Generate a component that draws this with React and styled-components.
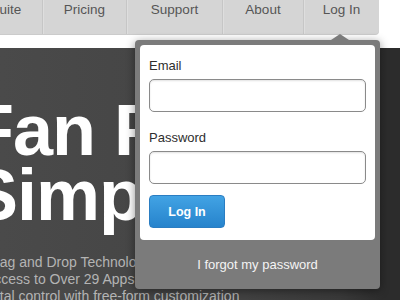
import React from 'react';
import styled, { createGlobalStyle } from 'styled-components';

const GlobalStyle = createGlobalStyle`
    html, body {
        margin: 0;
        padding: 0;
        background: #ffffff;
        font-family: "Liberation Sans", Arial, Helvetica, sans-serif;
        overflow: hidden;
    }
`;

const Page = styled.div`
    position: relative;
    width: 400px;
    height: 300px;
    overflow: hidden;
    display: flex;
    flex-direction: column;
`;

const TopBar = styled.div`
    height: 48px;
    flex: none;
    background: #ffffff;
`;

const Nav = styled.nav`
    width: 379px;
    height: 34px;
    display: flex;
    justify-content: flex-end;
    overflow: hidden;
    background: #d5d5d5;
    border-bottom-right-radius: 4px;
    box-shadow: 0 1px 0 #cbcbcb;
`;

const NavItem = styled.a`
    flex: none;
    width: ${(p) => p.$w}px;
    line-height: 20px;
    text-align: center;
    font-size: 13.5px;
    color: #555555;
    border-left: ${(p) => (p.$first ? 'none' : '1px solid #c6c6c6')};
    box-shadow: ${(p) => (p.$first ? 'none' : 'inset 1px 0 0 #dedede')};
    box-sizing: border-box;
    cursor: pointer;
`;

const Hero = styled.section`
    flex: 1;
    padding-top: 50px;
    background: linear-gradient(90deg, #4a4a4a 0%, #444444 55%, #3a3a3a 85%, #2c2c2c 96%);
`;

const Title = styled.h1`
    margin: 0 0 0 -30px;
    font-size: 72px;
    line-height: 65px;
    font-weight: bold;
    letter-spacing: -1px;
    color: #ffffff;
    white-space: nowrap;
`;

const Features = styled.div`
    margin: 26px 0 0 -15px;
    font-size: 14px;
    line-height: 17px;
    color: #b4b4b4;
    white-space: nowrap;
`;

const Popover = styled.div`
    position: absolute;
    left: 135px;
    top: 40px;
    width: 245px;
    padding: 5px 5px 0;
    box-sizing: border-box;
    background: #7b7b7b;
    border-radius: 4px;
    box-shadow: 0 2px 10px rgba(0, 0, 0, 0.45);

    &::before {
        content: '';
        position: absolute;
        top: -6px;
        left: 196px;
        border-left: 9px solid transparent;
        border-right: 9px solid transparent;
        border-bottom: 6px solid #7b7b7b;
    }
`;

const Panel = styled.form`
    background: #ffffff;
    border-radius: 4px;
    padding: 13px 9px 12px;
    display: flex;
    flex-direction: column;
`;

const Label = styled.label`
    font-size: 13px;
    line-height: 16px;
    color: #2e2e2e;
    margin-bottom: 5px;
`;

const Input = styled.input`
    height: 33px;
    box-sizing: border-box;
    border: 1px solid #8a8a8a;
    border-radius: 5px;
    box-shadow: inset 0 1px 2px rgba(0, 0, 0, 0.12);
    margin-bottom: ${(p) => p.$gap}px;
    padding: 0 8px;
    font: inherit;
    outline: none;
`;

const Button = styled.button`
    width: 76px;
    height: 33px;
    border: 1px solid #2a7dc2;
    border-radius: 4px;
    background: linear-gradient(#42a3e4, #2683cc);
    color: #ffffff;
    font-family: inherit;
    font-size: 12.5px;
    font-weight: bold;
    cursor: pointer;
`;

const Footer = styled.div`
    height: 49px;
    display: flex;
    align-items: center;
    justify-content: center;
    font-size: 13px;
    color: #f4f4f4;
    cursor: pointer;
`;

const navItems = [
    { label: 'Suite', w: 72 },
    { label: 'Pricing', w: 84 },
    { label: 'Support', w: 96 },
    { label: 'About', w: 81 },
    { label: 'Log In', w: 76 },
];

function App() {
    return (
        <Page>
            <GlobalStyle />
            <TopBar>
                <Nav>
                    {navItems.map((item, i) => (
                        <NavItem key={item.label} $w={item.w} $first={i === 0}>
                            {item.label}
                        </NavItem>
                    ))}
                </Nav>
            </TopBar>
            <Hero>
                <Title>
                    Fan Pages
                    <br />
                    Simplified
                </Title>
                <Features>
                    <div>Drag and Drop Technology</div>
                    <div>Access to Over 29 Apps</div>
                    <div>Total control with free-form customization</div>
                </Features>
            </Hero>
            <Popover>
                <Panel onSubmit={(e) => e.preventDefault()}>
                    <Label>Email</Label>
                    <Input type="email" $gap={18} />
                    <Label>Password</Label>
                    <Input type="password" $gap={11} />
                    <Button type="submit">Log In</Button>
                </Panel>
                <Footer>I forgot my password</Footer>
            </Popover>
        </Page>
    );
}

export default App;
